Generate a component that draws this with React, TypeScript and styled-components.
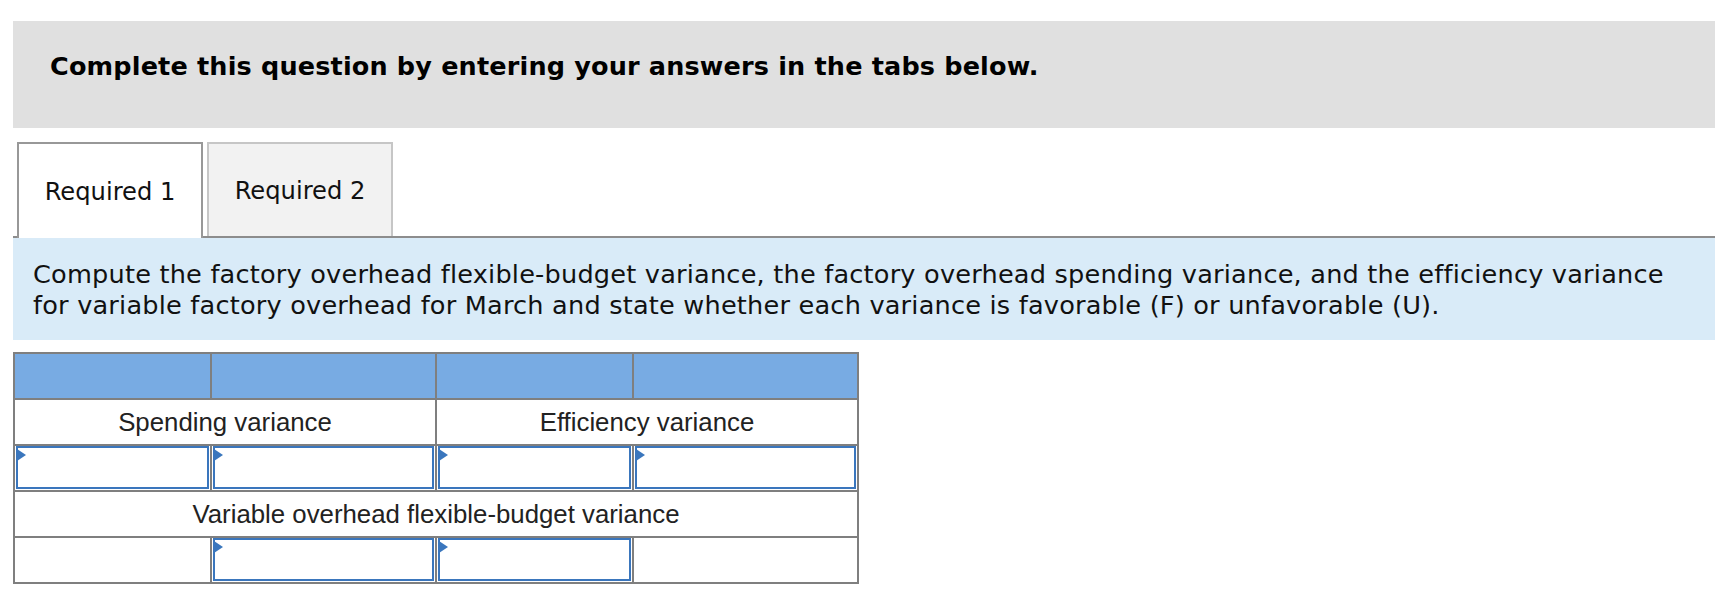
import React from "react";
import styled, { createGlobalStyle } from "styled-components";

const GlobalStyle = createGlobalStyle`
  html, body {
    margin: 0;
    padding: 0;
    background: #ffffff;
  }
  body {
    font-family: "DejaVu Sans", Verdana, sans-serif;
  }
`;

const Page = styled.div`
  width: 1702px;
  margin-left: 13px;
  padding-top: 21px;
`;

const Banner = styled.div`
  box-sizing: border-box;
  height: 107px;
  padding: 30px 0 0 37px;
  background: #e0e0e0;
  font-family: "DejaVu Sans", Verdana, sans-serif;
  font-weight: bold;
  font-size: 25.5px;
  letter-spacing: 0.17px;
  line-height: normal;
  color: #000;
`;

const TabStrip = styled.div`
  display: flex;
  align-items: flex-start;
  gap: 4px;
  margin-top: 14px;
  padding-left: 4px;
  height: 94px;
  border-bottom: 2px solid #8d8d8d;
`;

const Tab = styled.div<{ $active?: boolean }>`
  box-sizing: border-box;
  width: 186px;
  height: ${(p) => (p.$active ? "96px" : "94px")};
  margin-bottom: ${(p) => (p.$active ? "-2px" : "0")};
  display: flex;
  align-items: center;
  justify-content: center;
  padding-top: 2px;
  border: 2px solid ${(p) => (p.$active ? "#989898" : "#c6c6c6")};
  border-bottom: none;
  background: ${(p) => (p.$active ? "#ffffff" : "#f2f2f2")};
  font-family: "DejaVu Sans", Verdana, sans-serif;
  font-size: 24.2px;
  line-height: normal;
  color: #111;
`;

const Instructions = styled.div`
  padding: 21px 20px 19px 20px;
  background: #d9ebf8;
  font-family: "DejaVu Sans", Verdana, sans-serif;
  font-size: 25.6px;
  letter-spacing: 0.2px;
  line-height: 31px;
  color: #111;
`;

const Grid = styled.table`
  margin-top: 12px;
  border-collapse: separate;
  border-spacing: 2px;
  background: #7f7f7f;
  table-layout: fixed;
  width: 846px;
`;

const Row = styled.tr``;

const Cell = styled.td<{ $head?: boolean }>`
  padding: 0;
  height: 44px;
  background: ${(p) => (p.$head ? "#78abe3" : "#ffffff")};
  font-family: "Liberation Sans", Arial, sans-serif;
  font-size: 25.8px;
  line-height: normal;
  color: #222;
  text-align: center;
  vertical-align: middle;
`;

const EntryCell = styled.td`
  padding: 0;
  height: 44px;
  background: #ffffff;
  vertical-align: top;
`;

const EntryWrap = styled.div`
  position: relative;
  margin: 0 1px 0 1px;
  height: 43px;

  &::after {
    content: "";
    position: absolute;
    left: 1px;
    top: 3px;
    width: 0;
    height: 0;
    border-top: 6px solid transparent;
    border-bottom: 6px solid transparent;
    border-left: 9px solid #3a76bd;
    pointer-events: none;
  }
`;

const Entry = styled.input`
  display: block;
  box-sizing: border-box;
  width: 100%;
  height: 43px;
  margin: 0;
  border: 2px solid #3a76bd;
  border-radius: 0;
  background: #ffffff;
  outline: none;
  font-family: "Liberation Sans", Arial, sans-serif;
  font-size: 22px;
`;

const InputCell = () => (
  <EntryCell>
    <EntryWrap>
      <Entry type="text" aria-label="answer" />
    </EntryWrap>
  </EntryCell>
);

export default function App() {
  return (
    <>
      <GlobalStyle />
      <Page>
        <Banner>Complete this question by entering your answers in the tabs below.</Banner>
        <TabStrip>
          <Tab $active>Required 1</Tab>
          <Tab>Required 2</Tab>
        </TabStrip>
        <Instructions>
          Compute the factory overhead flexible-budget variance, the factory overhead spending
          variance, and the efficiency variance for variable factory overhead for March and state
          whether each variance is favorable (F) or unfavorable (U).
        </Instructions>
        <Grid>
          <colgroup>
            <col style={{ width: 195 }} />
            <col style={{ width: 223 }} />
            <col style={{ width: 195 }} />
            <col style={{ width: 223 }} />
          </colgroup>
          <tbody>
            <Row>
              <Cell $head />
              <Cell $head />
              <Cell $head />
              <Cell $head />
            </Row>
            <Row>
              <Cell colSpan={2}>Spending variance</Cell>
              <Cell colSpan={2}>Efficiency variance</Cell>
            </Row>
            <Row>
              <InputCell />
              <InputCell />
              <InputCell />
              <InputCell />
            </Row>
            <Row>
              <Cell colSpan={4}>Variable overhead flexible-budget variance</Cell>
            </Row>
            <Row>
              <Cell />
              <InputCell />
              <InputCell />
              <Cell />
            </Row>
          </tbody>
        </Grid>
      </Page>
    </>
  );
}
